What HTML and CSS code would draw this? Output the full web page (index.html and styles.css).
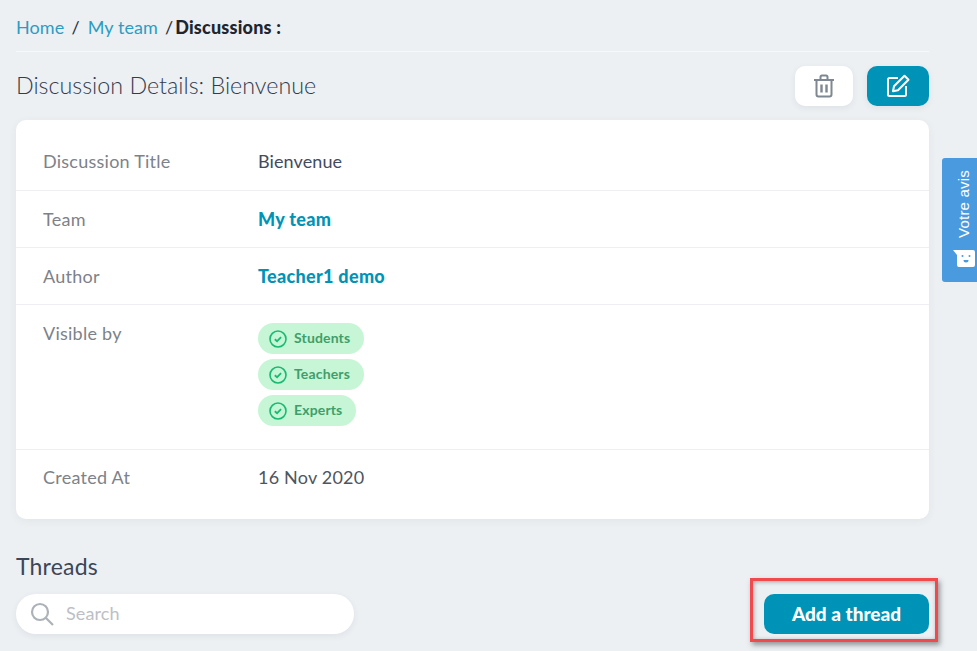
FILE: index.html
```html
<!DOCTYPE html>
<html lang="en">
<head>
<meta charset="utf-8">
<title>Discussion Details</title>
<link rel="stylesheet" href="styles.css">
</head>
<body>
<main class="page">
  <nav class="crumbs">
    <a class="crumb-link" href="#">Home</a><span class="sep">/</span><a class="crumb-link" href="#">My team</a><span class="sep sep-last">/</span><strong class="crumb-current">Discussions :</strong>
  </nav>
  <header class="title-row">
    <h1 class="title">Discussion Details: Bienvenue</h1>
    <div class="actions">
      <button class="icon-btn icon-btn-white" aria-label="Delete">
        <svg width="22" height="24" viewBox="0 0 22 24" fill="none" stroke="#7f8790" stroke-width="2"><path d="M1 6h20"/><path d="M7.500 5.500V3a1.500 1.500 0 0 1 1.500-1.500h4A1.500 1.500 0 0 1 14.500 3v2.500"/><path d="M3.500 6v14.500a2 2 0 0 0 2 2h11a2 2 0 0 0 2-2V6"/><path d="M8.500 10.500v8M13.500 10.500v8" stroke-width="2.400"/></svg>
      </button>
      <button class="icon-btn icon-btn-teal" aria-label="Edit">
        <svg width="24" height="24" viewBox="0 0 24 24" fill="none" stroke="#fff" stroke-width="2" stroke-linejoin="round"><path d="M12 4H3.500A1.500 1.500 0 0 0 2 5.500v15A1.500 1.500 0 0 0 3.500 22h15a1.500 1.500 0 0 0 1.500-1.500V12"/><path d="M18.500 1.800l4 4L12 16.300l-5 1 1-5z"/></svg>
      </button>
    </div>
  </header>
  <section class="card">
    <div class="row row-title"><div class="label">Discussion Title</div><div class="value value-dark">Bienvenue</div></div>
    <div class="row"><div class="label">Team</div><a class="value value-link" href="#">My team</a></div>
    <div class="row"><div class="label">Author</div><a class="value value-link" href="#">Teacher1 demo</a></div>
    <div class="row row-visible">
      <div class="label">Visible by</div>
      <div class="chips">
        <span class="chip"><svg class="chip-icon" width="18" height="18" viewBox="0 0 18 18" fill="none" stroke="#19b974" stroke-width="1.600"><circle cx="9" cy="9" r="8"/><path d="M5.800 9.200l2.300 2 4-4" stroke-width="1.800"/></svg>Students</span>
        <span class="chip"><svg class="chip-icon" width="18" height="18" viewBox="0 0 18 18" fill="none" stroke="#19b974" stroke-width="1.600"><circle cx="9" cy="9" r="8"/><path d="M5.800 9.200l2.300 2 4-4" stroke-width="1.800"/></svg>Teachers</span>
        <span class="chip"><svg class="chip-icon" width="18" height="18" viewBox="0 0 18 18" fill="none" stroke="#19b974" stroke-width="1.600"><circle cx="9" cy="9" r="8"/><path d="M5.800 9.200l2.300 2 4-4" stroke-width="1.800"/></svg>Experts</span>
      </div>
    </div>
    <div class="row row-last"><div class="label">Created At</div><div class="value value-date">16 Nov 2020</div></div>
  </section>
  <h2 class="threads">Threads</h2>
  <div class="tools">
    <label class="search">
      <svg width="24" height="24" viewBox="0 0 24 24" fill="none" stroke="#adb2b8" stroke-width="2.200"><circle cx="10" cy="10" r="8"/><path d="M16 16l7 7"/></svg>
      <span class="search-text">Search</span>
    </label>
    <button class="add">Add a thread</button>
  </div>
</main>
<div class="highlight"></div>
<aside class="feedback">
  <span class="feedback-text">Votre avis</span>
  <svg class="feedback-icon" width="23" height="17" viewBox="0 0 23 17"><path d="M0 0h20a2 2 0 0 1 2 2v13a2 2 0 0 1-2 2H6a2 2 0 0 1-2-2V5z" fill="#fff"/><circle cx="9.500" cy="6" r="1" fill="#4a9ae0"/><circle cx="16.500" cy="6" r="1" fill="#4a9ae0"/><path d="M10.500 10h5a2.500 2.500 0 0 1-5 0z" fill="#4a9ae0"/></svg>
</aside>
</body>
</html>
```
FILE: styles.css
```css
* { box-sizing: border-box; }
html, body { margin: 0; height: 100%; }
body {
  background: #ecf0f3;
  font-family: "Lato", "Noto Sans", sans-serif;
  overflow: hidden;
}
.page { width: 929px; padding-left: 16px; }
.crumbs {
  height: 52px;
  padding-top: 16px;
  font-size: 18px;
  line-height: 22px;
  border-bottom: 1px solid #f6f8f9;
  color: #2a2f3a;
  letter-spacing: 0.1px;
}
.crumb-link { color: #2d9cc4; text-decoration: none; }
.sep { margin: 0 8px 0 7px; }
.sep-last { margin: 0 2px 0 7px; }
.crumb-current { color: #20252e; font-weight: 900; font-size: 18px; letter-spacing: 0.2px; }
.title-row {
  display: flex;
  justify-content: space-between;
  align-items: center;
  margin-top: 14px;
  height: 40px;
}
.title { margin: -2px 0 0; font-size: 23.300px; font-weight: 300; color: #333c4e; }
.actions { display: flex; gap: 14px; }
.icon-btn {
  width: 58px;
  height: 40px;
  border: 0;
  border-radius: 10px;
  padding: 0;
  display: flex;
  align-items: center;
  justify-content: center;
  box-shadow: 0 2px 6px rgba(60, 70, 90, 0.08);
}
.icon-btn-white { background: #fff; }
.icon-btn-teal { background: #0093b8; width: 62px; }
.card {
  margin-top: 14px;
  height: 399px;
  background: #fff;
  border-radius: 10px;
  box-shadow: 0 2px 8px rgba(60, 70, 90, 0.06);
  font-size: 18px;
}
.row {
  display: flex;
  align-items: center;
  height: 57px;
  padding: 0 0 1px 27px;
  border-bottom: 1px solid #edeff2;
}
.row-title { height: 71px; padding-top: 11px; padding-bottom: 0; }
.row-visible { height: 145px; align-items: flex-start; padding-top: 17px; }
.row-last { height: 69px; border-bottom: 0; padding-bottom: 15px; }
.label { width: 215px; color: #7d8289; line-height: 22px; letter-spacing: 0.25px; }
.value { line-height: 22px; }
.value-dark { color: #414b63; letter-spacing: 0.1px; }
.value-date { color: #4e5560; letter-spacing: 0.2px; }
.value-link { color: #0093b8; font-weight: 900; text-decoration: none; letter-spacing: 0.3px; }
.chips { display: flex; flex-direction: column; align-items: flex-start; gap: 5px; margin-top: 1px; }
.chip {
  height: 31px;
  border-radius: 16px;
  background: #c6f6d5;
  color: #3f9e6c;
  font-size: 14px;
  font-weight: 700;
  display: flex;
  align-items: center;
  padding: 0 14px 3px 11px;
  letter-spacing: 0.15px;
}
.chip-icon { margin: 3px 7px 0 0; }
.threads {
  margin: 35px 0 0;
  height: 40px;
  font-size: 23px;
  line-height: 25px;
  font-weight: 400;
  color: #3d4656;
  letter-spacing: 0.2px;
}
.tools { display: flex; justify-content: space-between; }
.search {
  width: 338px;
  height: 40px;
  border-radius: 20px;
  background: #fff;
  display: flex;
  align-items: center;
  padding-left: 14px;
  box-shadow: 0 2px 6px rgba(60, 70, 90, 0.08);
}
.search-text { margin: -2px 0 0 12px; font-size: 18px; letter-spacing: 0.1px; color: #bcc0c5; }
.add {
  width: 165px;
  height: 40px;
  border: 0;
  border-radius: 10px;
  background: #0093b8;
  color: #fff;
  font: 900 19px "Lato", "Noto Sans", sans-serif;
  padding: 0 0 2px;
}
.highlight {
  position: absolute;
  left: 750px;
  top: 578px;
  width: 188px;
  height: 64px;
  border: 3px solid #f14a4c;
  box-shadow: 2px 3px 5px rgba(60, 60, 60, 0.5), inset 1px 1px 4px rgba(60, 60, 60, 0.4);
}
.feedback {
  position: absolute;
  left: 942px;
  top: 158px;
  width: 35px;
  height: 124px;
  background: #4a9ae0;
  border-radius: 3px 0 0 3px;
}
.feedback-text {
  position: absolute;
  left: 13px;
  top: 12px;
  writing-mode: vertical-rl;
  transform: rotate(180deg);
  font: 15px/17px "Liberation Sans", sans-serif;
  letter-spacing: 0.2px;
  color: #fff;
}
.feedback-icon { position: absolute; left: 11px; top: 92px; }
```
